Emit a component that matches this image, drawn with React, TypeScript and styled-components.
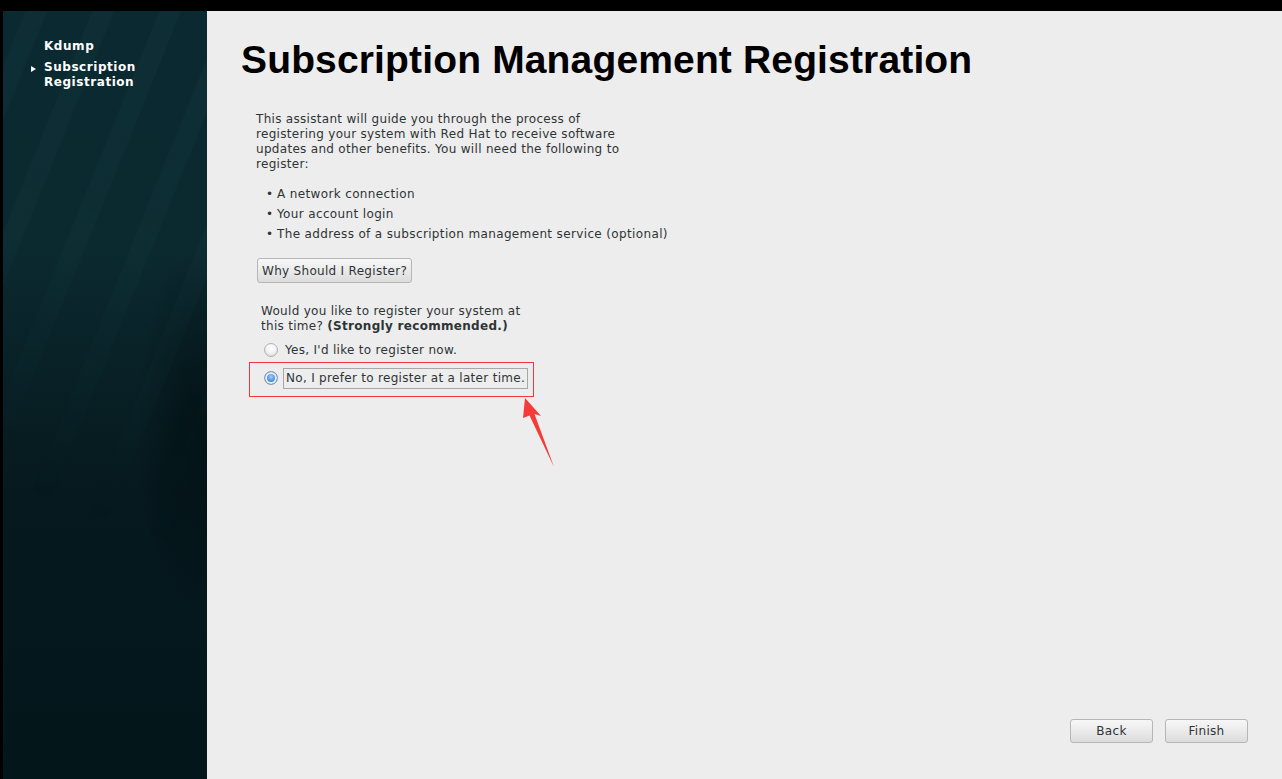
import React from 'react';
import styled, { createGlobalStyle } from 'styled-components';

const GlobalStyle = createGlobalStyle`
  html, body {
    margin: 0;
    padding: 0;
    background: #000;
  }
  * {
    box-sizing: border-box;
  }
`;

const Screen = styled.div`
  position: relative;
  display: flex;
  width: 1282px;
  height: 779px;
  padding: 11px 0 0 3px;
  background: #000;
  overflow: hidden;
  font-family: 'DejaVu Sans', 'Noto Sans', sans-serif;
`;

const Sidebar = styled.aside`
  position: relative;
  width: 204px;
  flex-shrink: 0;
  padding: 28px 0 0 41px;
  background:
    radial-gradient(ellipse 90px 260px at 195px 420px, rgba(0, 10, 12, 0.55), transparent 70%),
    linear-gradient(180deg, #0b2930 0%, #0b2a30 30%, #06191e 62%, #03161a 100%);
  overflow: hidden;

  &::before {
    content: '';
    position: absolute;
    inset: 0;
    background: repeating-linear-gradient(
      112deg,
      rgba(60, 120, 130, 0) 0px,
      rgba(60, 120, 130, 0) 20px,
      rgba(60, 120, 130, 0.07) 22px,
      rgba(60, 120, 130, 0.07) 40px,
      rgba(60, 120, 130, 0) 42px,
      rgba(60, 120, 130, 0) 62px
    );
    -webkit-mask-image: linear-gradient(200deg, #000 0%, rgba(0, 0, 0, 0.6) 38%, transparent 66%);
    mask-image: linear-gradient(200deg, #000 0%, rgba(0, 0, 0, 0.6) 38%, transparent 66%);
  }
`;

const NavList = styled.ul`
  position: relative;
  margin: 0;
  padding: 0;
  list-style: none;
  display: flex;
  flex-direction: column;
  gap: 6px;
`;

type NavItemProps = {
  $current?: boolean;
};

const NavItem = styled.li<NavItemProps>`
  position: relative;
  color: #fff;
  font-family: 'DejaVu Sans', sans-serif;
  font-weight: bold;
  font-size: 12px;
  line-height: 15px;
  letter-spacing: 0.55px;

  &::before {
    content: '';
    display: ${({ $current }) => ($current ? 'block' : 'none')};
    position: absolute;
    left: -13px;
    top: 6px;
    border-left: 5px solid #fff;
    border-top: 3.5px solid transparent;
    border-bottom: 3.5px solid transparent;
  }
`;

const Main = styled.main`
  flex: 1;
  display: flex;
  flex-direction: column;
  background: #ededed;
  padding: 27px 0 0 34px;
`;

const Title = styled.h1`
  margin: 0;
  font-family: 'Liberation Sans', Arial, sans-serif;
  font-weight: bold;
  font-size: 39px;
  line-height: 44px;
  letter-spacing: 0.15px;
  color: #000;
`;

const Content = styled.section`
  display: flex;
  flex-direction: column;
  align-items: flex-start;
  padding: 30px 0 0 15px;
  color: #2e3436;
  font-size: 12px;
  letter-spacing: 0.3px;
`;

const Intro = styled.p`
  margin: 0;
  line-height: 15px;
  white-space: nowrap;
`;

const Needs = styled.ul`
  margin: 12px 0 0;
  padding: 0 0 0 10px;
  list-style: none;
`;

const Need = styled.li`
  display: flex;
  line-height: 20px;
  letter-spacing: 0.36px;

  &::before {
    content: '•';
    width: 11px;
  }
`;

const Button = styled.button`
  font-family: 'DejaVu Sans', sans-serif;
  font-size: 12px;
  letter-spacing: 0.3px;
  color: #2e3436;
  background: linear-gradient(180deg, #f7f7f7 0%, #e9e9e9 55%, #dcdcdc 100%);
  border: 1px solid #b6b6b6;
  border-radius: 3px;
  padding: 0 4px;
  height: 25px;
  cursor: pointer;
`;

const WhyButton = styled(Button)`
  margin: 14px 0 0 1px;
`;

const Question = styled.p`
  margin: 21px 0 0 5px;
  line-height: 15px;
  white-space: nowrap;
`;

const Choices = styled.div`
  display: flex;
  flex-direction: column;
  gap: 6px;
  margin: 5px 0 0 8px;
`;

const Choice = styled.label`
  display: flex;
  align-items: center;
  gap: 4px;
  height: 22px;
  cursor: pointer;
`;

type RadioProps = {
  $checked?: boolean;
};

const Radio = styled.span<RadioProps>`
  width: 14px;
  height: 14px;
  border-radius: 50%;
  flex-shrink: 0;
  border: 1px solid ${({ $checked }) => ($checked ? '#8a99a8' : '#b3b3b3')};
  background: ${({ $checked }) =>
    $checked
      ? 'radial-gradient(circle at 50% 40%, #a9cdf5 0%, #4a90e2 45%, #2f6fc0 100%)'
      : 'radial-gradient(circle at 50% 35%, #ffffff 0%, #f4f4f4 45%, #d8d8d8 100%)'};
  box-shadow: ${({ $checked }) =>
    $checked ? 'inset 0 0 0 2px #e6eef7' : 'inset 0 -1px 1px rgba(0,0,0,0.05)'};
`;

type ChoiceTextProps = {
  $focused?: boolean;
};

const ChoiceText = styled.span<ChoiceTextProps>`
  line-height: 19px;
  padding: 0 2px;
  border: 1px solid ${({ $focused }) => ($focused ? '#a7a7a7' : 'transparent')};
  margin-left: ${({ $focused }) => ($focused ? '1px' : '0')};
`;

const Footer = styled.footer`
  margin-top: auto;
  display: flex;
  justify-content: flex-end;
  gap: 12px;
  padding: 0 34px 36px 0;
`;

const NavButton = styled(Button)`
  width: 83px;
  height: 24px;
`;

const Highlight = styled.div`
  position: absolute;
  left: 249px;
  top: 362px;
  width: 285px;
  height: 35px;
  border: 1px solid #f0363b;
  pointer-events: none;
`;

const Pointer = styled.svg`
  position: absolute;
  left: 515px;
  top: 395px;
  pointer-events: none;
`;

const App = () => (
  <>
    <GlobalStyle />
    <Screen>
      <Sidebar>
        <NavList>
          <NavItem>Kdump</NavItem>
          <NavItem $current>
            Subscription
            <br />
            Registration
          </NavItem>
        </NavList>
      </Sidebar>
      <Main>
        <Title>Subscription Management Registration</Title>
        <Content>
          <Intro>
            This assistant will guide you through the process of
            <br />
            registering your system with Red Hat to receive software
            <br />
            updates and other benefits. You will need the following to
            <br />
            register:
          </Intro>
          <Needs>
            <Need>A network connection</Need>
            <Need>Your account login</Need>
            <Need>The address of a subscription management service (optional)</Need>
          </Needs>
          <WhyButton>Why Should I Register?</WhyButton>
          <Question>
            Would you like to register your system at
            <br />
            this time? <b>(Strongly recommended.)</b>
          </Question>
          <Choices>
            <Choice>
              <Radio />
              <ChoiceText>Yes, I'd like to register now.</ChoiceText>
            </Choice>
            <Choice>
              <Radio $checked />
              <ChoiceText $focused>No, I prefer to register at a later time.</ChoiceText>
            </Choice>
          </Choices>
        </Content>
        <Footer>
          <NavButton>Back</NavButton>
          <NavButton>Finish</NavButton>
        </Footer>
      </Main>
      <Highlight />
      <Pointer width="50" height="80" viewBox="0 0 50 80">
        <path d="M10 3 L26 21 L19.5 19 L39 72 L14.5 20.5 L8 23 Z" fill="#f53a3a" />
      </Pointer>
    </Screen>
  </>
);

export default App;
